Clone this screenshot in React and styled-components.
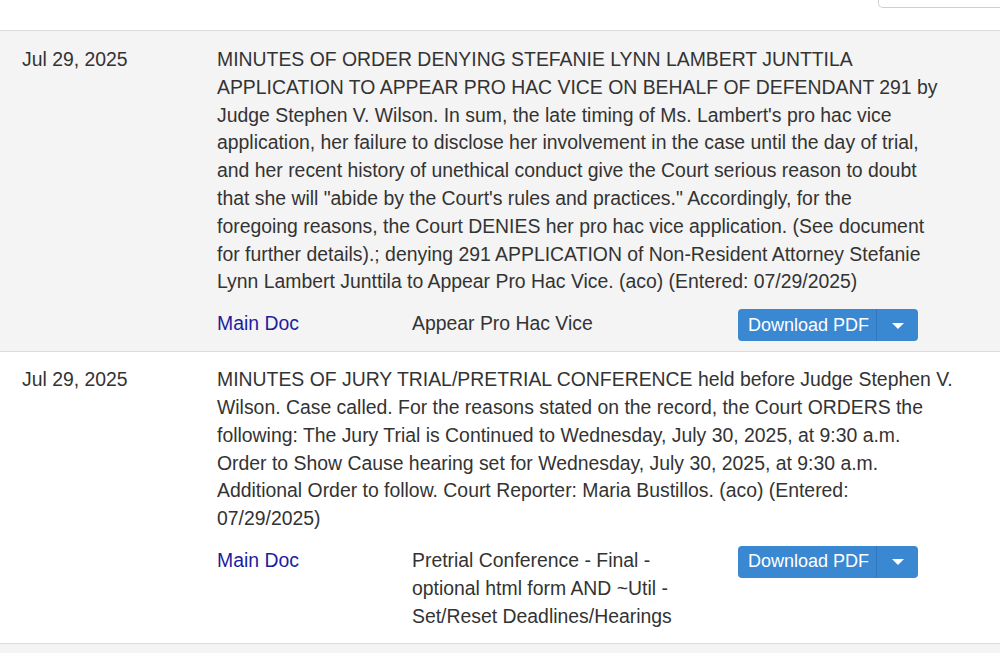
import styled, { createGlobalStyle } from "styled-components";

const Global = createGlobalStyle`
  html, body {
    margin: 0;
    padding: 0;
    background: #f4f4f4;
  }
  body {
    font-family: "Liberation Sans", Arial, Helvetica, sans-serif;
    color: #333;
    overflow: hidden;
  }
`;

const Page = styled.div`
  width: 1000px;
  height: 653px;
  overflow: hidden;
  background: #f4f4f4;
`;

const TopBar = styled.div`
  height: 30px;
  background: #fff;
  border-bottom: 1px solid #dcdcdc;
  display: flex;
  justify-content: flex-end;
  align-items: flex-start;
`;

const ToolBox = styled.div`
  width: 140px;
  height: 7px;
  margin-right: -20px;
  border: 1px solid #cfcfcf;
  border-top: none;
  border-radius: 0 0 5px 5px;
  background: #fff;
`;

const Entry = styled.div`
  display: grid;
  grid-template-columns: 195px 760px;
  padding: ${(p) => (p.$tall ? "14px 0 13px 22px" : "15px 0 10px 22px")};
  background: ${(p) => (p.$shade ? "#f4f4f4" : "#fff")};
  border-bottom: 1px solid #dcdcdc;
  font-size: 19.4px;
  line-height: 27.8px;
`;

const DateCell = styled.div`
  color: #333;
`;

const Body = styled.div`
  display: flex;
  flex-direction: column;
  gap: 14px;
`;

const Text = styled.div`
  color: #333;
`;

const Line = styled.span`
  display: block;
  white-space: nowrap;
`;

const Footer = styled.div`
  display: grid;
  grid-template-columns: 195px 326px auto;
  align-items: start;
`;

const DocLink = styled.a`
  color: #1d1d9e;
  text-decoration: none;
  cursor: pointer;
`;

const DocType = styled.div`
  width: 270px;
  color: #333;
`;

const SplitButton = styled.div`
  display: flex;
  width: 180px;
  height: 32px;
  margin-top: -1px;
  border-radius: 4px;
  overflow: hidden;
  background: #3a87d2;
`;

const MainBtn = styled.button`
  flex: 1;
  border: none;
  background: transparent;
  color: #fff;
  font-family: "Liberation Sans", Arial, sans-serif;
  font-size: 18px;
  padding: 0 0 0 10px;
  text-align: left;
  border-right: 1px solid #2f77bf;
`;

const CaretBtn = styled.button`
  width: 41px;
  border: none;
  background: transparent;
  display: flex;
  align-items: center;
  justify-content: center;
  padding: 0;

  &::after {
    content: "";
    border-left: 6px solid transparent;
    border-right: 6px solid transparent;
    border-top: 6px solid #fff;
    margin-top: 1px;
  }
`;

const entries = [
  {
    date: "Jul 29, 2025",
    lines: [
      "MINUTES OF ORDER DENYING STEFANIE LYNN LAMBERT JUNTTILA",
      "APPLICATION TO APPEAR PRO HAC VICE ON BEHALF OF DEFENDANT 291 by",
      "Judge Stephen V. Wilson. In sum, the late timing of Ms. Lambert's pro hac vice",
      "application, her failure to disclose her involvement in the case until the day of trial,",
      "and her recent history of unethical conduct give the Court serious reason to doubt",
      "that she will \"abide by the Court's rules and practices.\" Accordingly, for the",
      "foregoing reasons, the Court DENIES her pro hac vice application. (See document",
      "for further details).; denying 291 APPLICATION of Non-Resident Attorney Stefanie",
      "Lynn Lambert Junttila to Appear Pro Hac Vice. (aco) (Entered: 07/29/2025)",
    ],
    type: "Appear Pro Hac Vice",
    shade: true,
  },
  {
    date: "Jul 29, 2025",
    lines: [
      "MINUTES OF JURY TRIAL/PRETRIAL CONFERENCE held before Judge Stephen V.",
      "Wilson. Case called. For the reasons stated on the record, the Court ORDERS the",
      "following: The Jury Trial is Continued to Wednesday, July 30, 2025, at 9:30 a.m.",
      "Order to Show Cause hearing set for Wednesday, July 30, 2025, at 9:30 a.m.",
      "Additional Order to follow. Court Reporter: Maria Bustillos. (aco) (Entered:",
      "07/29/2025)",
    ],
    type: "Pretrial Conference - Final - optional html form AND ~Util - Set/Reset Deadlines/Hearings",
    shade: false,
    tall: true,
  },
];

export default function App() {
  return (
    <Page>
      <Global />
      <TopBar>
        <ToolBox />
      </TopBar>
      {entries.map((e, i) => (
        <Entry key={i} $shade={e.shade} $tall={e.tall}>
          <DateCell>{e.date}</DateCell>
          <Body>
            <Text>
              {e.lines.map((l, j) => (
                <Line key={j}>{l} </Line>
              ))}
            </Text>
            <Footer>
              <DocLink>Main Doc</DocLink>
              <DocType>{e.type}</DocType>
              <SplitButton>
                <MainBtn>Download PDF</MainBtn>
                <CaretBtn aria-label="More" />
              </SplitButton>
            </Footer>
          </Body>
        </Entry>
      ))}
    </Page>
  );
}
